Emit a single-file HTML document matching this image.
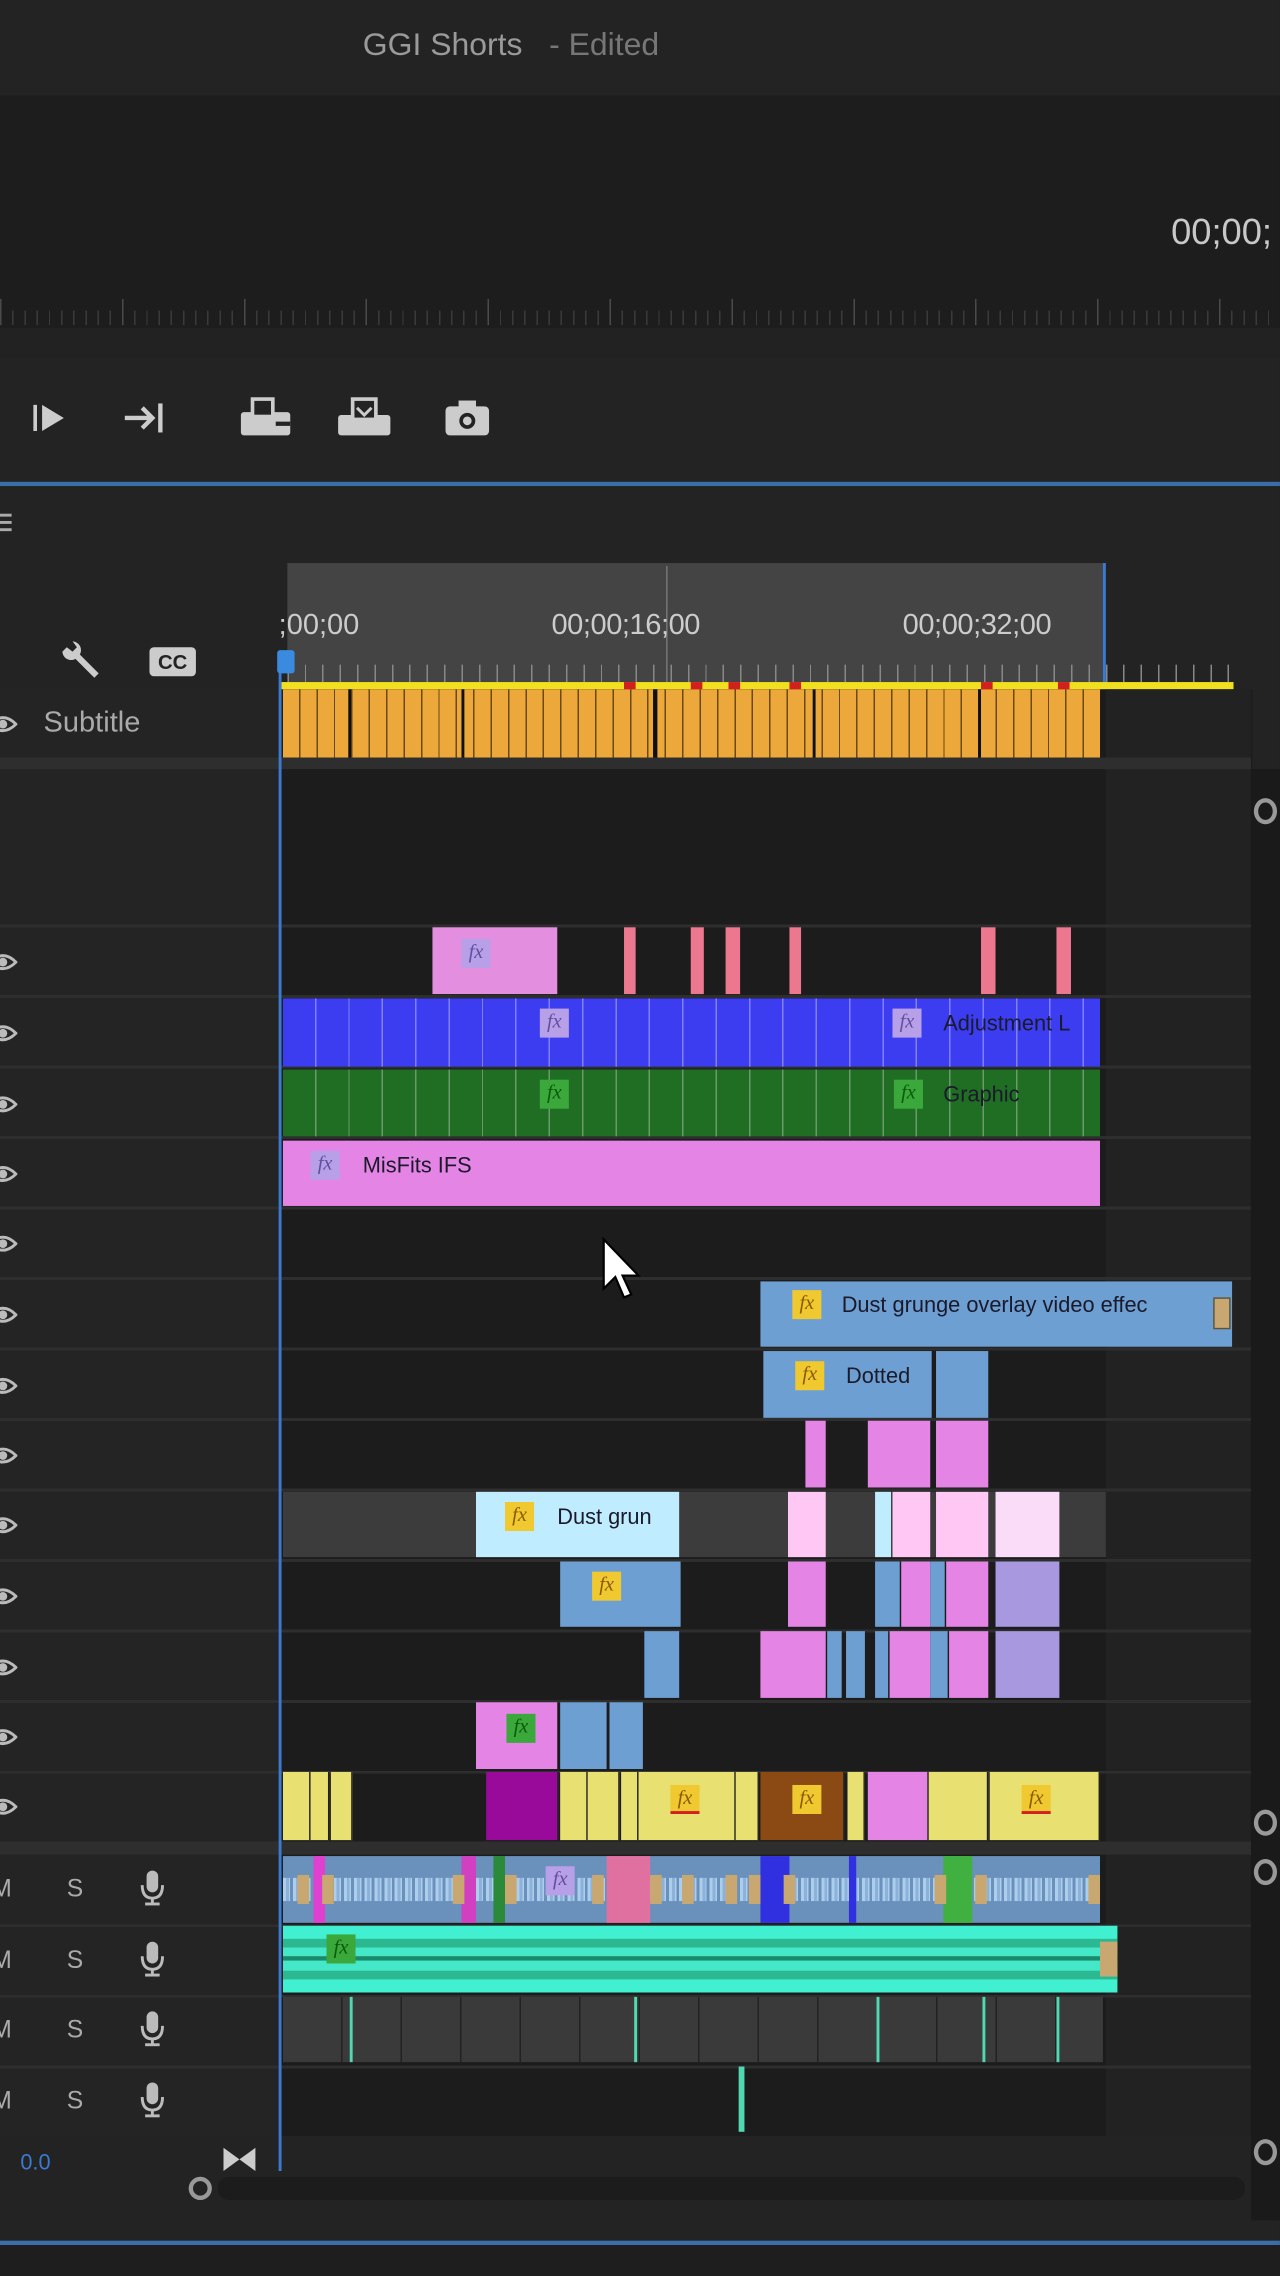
<!DOCTYPE html>
<html><head><meta charset="utf-8"><style>
*{margin:0;padding:0;box-sizing:border-box}
body{width:1280px;height:2276px;overflow:hidden;background:#1e1e1e;font-family:"Liberation Sans",sans-serif}
#w{position:absolute;left:0;top:0;width:882px;height:1568px;transform:scale(1.4512);transform-origin:0 0;background:#1e1e1e;overflow:hidden}
.a{position:absolute}
.c{position:absolute;border-right:1px solid #222}
.fx{position:absolute;width:20px;height:20px;font:italic 14px "Liberation Serif",serif;text-align:center;line-height:20px}
.y{background:#f0c830;color:#8a5a00}
.p{background:#b8a0e8;color:#6050a0}
.g{background:#3aa83a;color:#0c5a0c}
.t{position:absolute;font-size:15px;color:#1a1a2a;white-space:nowrap}
.eye{position:absolute;left:-8px;width:20px;height:14px}
.lbl{position:absolute;color:#aaa;font-size:17px}
.mic{position:absolute;left:96px;width:18px;height:26px}
</style></head><body><div id="w">
<svg width="0" height="0" style="position:absolute"><defs>
<symbol id="eye" viewBox="0 0 20 14"><path d="M1 7 Q10 -2 19 7 Q10 16 1 7 Z" fill="none" stroke="#bbb" stroke-width="2"/><circle cx="10" cy="7" r="3" fill="#bbb"/></symbol>
<symbol id="mic" viewBox="0 0 18 26"><rect x="5" y="1" width="8" height="15" rx="4" fill="#bbb"/><path d="M2 11 Q2 20 9 20 Q16 20 16 11" fill="none" stroke="#bbb" stroke-width="2"/><rect x="8" y="20" width="2" height="4" fill="#bbb"/><rect x="4" y="23" width="10" height="2" fill="#bbb"/></symbol>
</defs></svg>
<!-- top -->
<div class="a" style="left:0;top:0;width:882px;height:66px;background:#232323"></div>
<div class="a" style="left:250px;top:18px;font-size:22px;color:#9a9a9a">GGI Shorts&nbsp;&nbsp;&nbsp;<span style="color:#777">- Edited</span></div>
<div class="a" style="left:0;top:66px;width:882px;height:180px;background:#1d1d1d"></div>
<div class="a" style="left:807px;top:146px;font-size:25px;color:#c8c8c8">00;00;</div>
<div class="a" style="left:0;top:214px;width:882px;height:10px;background:repeating-linear-gradient(90deg,#3a3a3a 0 1px,transparent 1px 8.4px)"></div>
<div class="a" style="left:0;top:206px;width:882px;height:18px;background:repeating-linear-gradient(90deg,#4a4a4a 0 1px,transparent 1px 84px)"></div>
<div class="a" style="left:0;top:226px;width:882px;height:20px;background:#222"></div>
<div class="a" style="left:0;top:246px;width:882px;height:86px;background:#232323"></div>
<svg class="a" style="left:22px;top:277px" width="28" height="22" viewBox="0 0 28 22"><rect x="1" y="2" width="2.5" height="18" fill="#ccc"/><path d="M7 2 L22 11 L7 20 Z" fill="#ccc"/></svg>
<svg class="a" style="left:84px;top:276px" width="34" height="24" viewBox="0 0 34 24"><path d="M2 12 H20 M14 5 L21 12 L14 19" fill="none" stroke="#ccc" stroke-width="3"/><rect x="25" y="2" width="3" height="20" fill="#ccc"/></svg>
<svg class="a" style="left:164px;top:272px" width="42" height="30" viewBox="0 0 42 30"><rect x="2" y="12" width="34" height="16" rx="2" fill="#ccc"/><rect x="10" y="3" width="14" height="12" fill="#232323" stroke="#ccc" stroke-width="2.5"/><path d="M26 20 h10" stroke="#232323" stroke-width="3"/></svg>
<svg class="a" style="left:231px;top:272px" width="42" height="30" viewBox="0 0 42 30"><rect x="2" y="14" width="36" height="14" rx="2" fill="#ccc"/><rect x="12" y="3" width="16" height="14" fill="#232323" stroke="#ccc" stroke-width="2.5"/><path d="M15 9 L20 14 L25 9" fill="none" stroke="#ccc" stroke-width="2"/></svg>
<svg class="a" style="left:306px;top:275px" width="32" height="26" viewBox="0 0 32 26"><rect x="1" y="5" width="30" height="20" rx="3" fill="#ccc"/><rect x="10" y="1" width="12" height="6" fill="#ccc"/><circle cx="16" cy="15" r="5.5" fill="#232323"/><circle cx="16" cy="15" r="3" fill="#ccc"/></svg>
<div class="a" style="left:0;top:332px;width:882px;height:3px;background:#3a6ea8"></div>
<!-- timeline panel -->
<div class="a" style="left:0;top:335px;width:882px;height:1210px;background:#232323"></div>
<div class="a" style="left:0;top:354px;width:8px;height:2px;background:#aaa;box-shadow:0 5px #aaa,0 10px #aaa"></div>
<div class="a" style="left:198px;top:388px;width:564px;height:84px;background:#444"></div>
<div class="a" style="left:459px;top:390px;width:1px;height:82px;background:#777"></div>
<div class="a" style="left:192px;top:420px;font-size:20px;color:#ccc">;00;00</div>
<div class="a" style="left:380px;top:420px;font-size:20px;color:#ccc;letter-spacing:-.3px">00;00;16;00</div>
<div class="a" style="left:622px;top:420px;font-size:20px;color:#ccc;letter-spacing:-.3px">00;00;32;00</div>
<div class="a" style="left:198px;top:458px;width:652px;height:12px;background:repeating-linear-gradient(90deg,#888 0 1px,transparent 1px 12px)"></div>
<div class="a" style="left:760px;top:388px;width:2px;height:84px;background:#3a7ad0"></div>
<svg class="a" style="left:38px;top:440px" width="32" height="32" viewBox="0 0 32 32"><path d="M5 9 a6 6 0 0 0 9 5 L27 27 L30 24 L17 11 a6 6 0 0 0 -5 -9 l3 4 -3 3 -4 -3 Z" fill="#ccc"/></svg>
<div class="a" style="left:103px;top:446px;width:32px;height:20px;background:#ccc;border-radius:3px;font:bold 14px sans-serif;color:#232323;text-align:center;line-height:20px">CC</div>
<div class="a" style="left:194px;top:470px;width:656px;height:5px;background:#f0e020"></div>
<!-- track area -->
<div class="a" style="left:193px;top:475px;width:670px;height:1000px;background:#1c1c1c"></div>
<div class="a" style="left:762px;top:475px;width:100px;height:1000px;background:#222"></div>
<div class="a" style="left:0;top:522px;width:862px;height:8px;background:#2e2e2e"></div>
<div class="a" style="left:862px;top:530px;width:20px;height:1000px;background:#1a1a1a"></div>
<div class="a" style="left:0;top:475px;width:192px;height:1000px;background:#242424"></div>
<div class="a" style="left:0;top:522px;width:192px;height:8px;background:#2e2e2e"></div>
<svg class="eye" style="top:492px"><use href="#eye"/></svg>
<div class="a" style="left:30px;top:487px;font-size:20px;color:#aaa">Subtitle</div>
<!-- subtitle clips -->
<div class="a" style="left:195px;top:475px;width:563px;height:47px;background:#eca83a;background-image:repeating-linear-gradient(90deg,transparent 0 11px,#6a4a10 11px 12px)"></div>
<div class="a" style="left:318px;top:475px;width:2px;height:47px;background:#111"></div>
<div class="a" style="left:450px;top:475px;width:3px;height:47px;background:#111"></div>
<div class="a" style="left:674px;top:475px;width:2px;height:47px;background:#111"></div>
<div class="a" style="left:240px;top:475px;width:2px;height:47px;background:#111"></div>
<div class="a" style="left:560px;top:475px;width:2px;height:47px;background:#111"></div>
<div class="a" style="left:430px;top:470px;width:8px;height:5px;background:#d02020"></div>
<div class="a" style="left:476px;top:470px;width:8px;height:5px;background:#d02020"></div>
<div class="a" style="left:502px;top:470px;width:8px;height:5px;background:#d02020"></div>
<div class="a" style="left:544px;top:470px;width:8px;height:5px;background:#d02020"></div>
<div class="a" style="left:676px;top:470px;width:8px;height:5px;background:#d02020"></div>
<div class="a" style="left:729px;top:470px;width:8px;height:5px;background:#d02020"></div>
<!-- track separators -->
<div class="a" style="left:0;top:637px;width:862px;height:633px;background:repeating-linear-gradient(180deg,#2e2e2e 0 2px,transparent 2px 48.6px)"></div>
<!-- eyes -->
<svg class="eye" style="top:656px"><use href="#eye"/></svg><svg class="eye" style="top:705px"><use href="#eye"/></svg><svg class="eye" style="top:754px"><use href="#eye"/></svg><svg class="eye" style="top:802px"><use href="#eye"/></svg><svg class="eye" style="top:850px"><use href="#eye"/></svg><svg class="eye" style="top:899px"><use href="#eye"/></svg><svg class="eye" style="top:948px"><use href="#eye"/></svg><svg class="eye" style="top:996px"><use href="#eye"/></svg><svg class="eye" style="top:1044px"><use href="#eye"/></svg><svg class="eye" style="top:1093px"><use href="#eye"/></svg><svg class="eye" style="top:1142px"><use href="#eye"/></svg><svg class="eye" style="top:1190px"><use href="#eye"/></svg><svg class="eye" style="top:1238px"><use href="#eye"/></svg>
<!-- row 638 -->
<div class="a" style="left:298px;top:639px;width:86px;height:46px;background:#e48ee0"></div><div class="fx p" style="left:318px;top:647px">fx</div>
<div class="a" style="left:430px;top:639px;width:8px;height:46px;background:#ec7890"></div>
<div class="a" style="left:476px;top:639px;width:9px;height:46px;background:#ec7890"></div>
<div class="a" style="left:500px;top:639px;width:10px;height:46px;background:#ec7890"></div>
<div class="a" style="left:544px;top:639px;width:8px;height:46px;background:#ec7890"></div>
<div class="a" style="left:676px;top:639px;width:10px;height:46px;background:#ec7890"></div>
<div class="a" style="left:728px;top:639px;width:10px;height:46px;background:#ec7890"></div>
<!-- blue -->
<div class="a" style="left:195px;top:688px;width:563px;height:47px;background:#3c3cf0;background-image:repeating-linear-gradient(90deg,transparent 0 22px,#8080ff 22px 23px)"></div>
<div class="fx p" style="left:372px;top:695px">fx</div><div class="fx p" style="left:615px;top:695px">fx</div>
<div class="t" style="left:650px;top:697px">Adjustment L</div>
<!-- green -->
<div class="a" style="left:195px;top:737px;width:563px;height:46px;background:#1f6e24;background-image:repeating-linear-gradient(90deg,transparent 0 22px,#6a9a6a 22px 23px)"></div>
<div class="fx g" style="left:372px;top:744px">fx</div><div class="fx g" style="left:616px;top:744px">fx</div>
<div class="t" style="left:650px;top:746px">Graphic</div>
<!-- misfits -->
<div class="a" style="left:195px;top:786px;width:563px;height:45px;background:#e484e4"></div>
<div class="fx p" style="left:214px;top:793px">fx</div>
<div class="t" style="left:250px;top:795px">MisFits IFS</div>
<!-- dust grunge -->
<div class="a" style="left:524px;top:883px;width:325px;height:45px;background:#6e9fd2"></div>
<div class="fx y" style="left:546px;top:889px">fx</div>
<div class="t" style="left:580px;top:891px">Dust grunge overlay video effec</div>
<div class="a" style="left:836px;top:894px;width:12px;height:22px;background:#c8a870;border:1px solid #554"></div>
<!-- dotted -->
<div class="a" style="left:526px;top:931px;width:116px;height:46px;background:#6e9fd2"></div>
<div class="a" style="left:645px;top:931px;width:36px;height:46px;background:#6e9fd2"></div>
<div class="fx y" style="left:548px;top:938px">fx</div>
<div class="t" style="left:583px;top:940px">Dotted</div>
<!-- row 978 -->
<div class="a" style="left:555px;top:979px;width:14px;height:46px;background:#e484e4"></div>
<div class="a" style="left:598px;top:979px;width:43px;height:46px;background:#e484e4"></div>
<div class="a" style="left:645px;top:979px;width:36px;height:46px;background:#e484e4"></div>
<!-- row 1027 -->
<div class="a" style="left:195px;top:1028px;width:567px;height:45px;background:#3c3c3c"></div>
<div class="a" style="left:328px;top:1028px;width:140px;height:45px;background:#c0ecff"></div>
<div class="fx y" style="left:348px;top:1035px">fx</div>
<div class="t" style="left:384px;top:1037px">Dust grun</div>
<div class="a" style="left:543px;top:1028px;width:26px;height:45px;background:#ffc8f4"></div>
<div class="a" style="left:603px;top:1028px;width:11px;height:45px;background:#c0ecff"></div>
<div class="a" style="left:615px;top:1028px;width:26px;height:45px;background:#ffc8f4"></div>
<div class="a" style="left:645px;top:1028px;width:36px;height:45px;background:#ffc8f4"></div>
<div class="a" style="left:686px;top:1028px;width:44px;height:45px;background:#fadcf8"></div>
<!-- row 1075 -->
<div class="a" style="left:386px;top:1076px;width:83px;height:45px;background:#6e9fd2"></div>
<div class="fx y" style="left:408px;top:1083px">fx</div>
<div class="a" style="left:543px;top:1076px;width:26px;height:45px;background:#e484e4"></div>
<div class="a" style="left:603px;top:1076px;width:17px;height:45px;background:#6e9fd2"></div>
<div class="a" style="left:621px;top:1076px;width:20px;height:45px;background:#e484e4"></div>
<div class="a" style="left:641px;top:1076px;width:10px;height:45px;background:#6e9fd2"></div>
<div class="a" style="left:652px;top:1076px;width:29px;height:45px;background:#e484e4"></div>
<div class="a" style="left:686px;top:1076px;width:44px;height:45px;background:#a898e0"></div>
<!-- row 1123 -->
<div class="a" style="left:444px;top:1124px;width:24px;height:46px;background:#6e9fd2"></div>
<div class="a" style="left:524px;top:1124px;width:45px;height:46px;background:#e484e4"></div>
<div class="a" style="left:570px;top:1124px;width:10px;height:46px;background:#6e9fd2"></div>
<div class="a" style="left:583px;top:1124px;width:13px;height:46px;background:#6e9fd2"></div>
<div class="a" style="left:603px;top:1124px;width:9px;height:46px;background:#6e9fd2"></div>
<div class="a" style="left:613px;top:1124px;width:28px;height:46px;background:#e484e4"></div>
<div class="a" style="left:641px;top:1124px;width:12px;height:46px;background:#6e9fd2"></div>
<div class="a" style="left:654px;top:1124px;width:27px;height:46px;background:#e484e4"></div>
<div class="a" style="left:686px;top:1124px;width:44px;height:46px;background:#a898e0"></div>
<!-- row 1172 -->
<div class="a" style="left:328px;top:1173px;width:56px;height:46px;background:#e484e4"></div>
<div class="fx g" style="left:349px;top:1181px">fx</div>
<div class="a" style="left:386px;top:1173px;width:32px;height:46px;background:#6e9fd2"></div>
<div class="a" style="left:420px;top:1173px;width:23px;height:46px;background:#6e9fd2"></div>
<!-- row 1221 -->
<div class="c" style="left:195px;top:1221px;width:19px;height:47px;background:#e8e070"></div>
<div class="c" style="left:214px;top:1221px;width:13px;height:47px;background:#e8e070"></div>
<div class="c" style="left:228px;top:1221px;width:15px;height:47px;background:#e8e070"></div>
<div class="c" style="left:335px;top:1221px;width:50px;height:47px;background:#9a0a9a"></div>
<div class="c" style="left:386px;top:1221px;width:19px;height:47px;background:#e8e070"></div>
<div class="c" style="left:405px;top:1221px;width:22px;height:47px;background:#e8e070"></div>
<div class="c" style="left:428px;top:1221px;width:12px;height:47px;background:#e8e070"></div>
<div class="c" style="left:440px;top:1221px;width:67px;height:47px;background:#e8e070"></div>
<div class="c" style="left:507px;top:1221px;width:16px;height:47px;background:#e8e070"></div>
<div class="c" style="left:524px;top:1221px;width:58px;height:47px;background:#8b4a14"></div>
<div class="c" style="left:584px;top:1221px;width:12px;height:47px;background:#e8e070"></div>
<div class="c" style="left:598px;top:1221px;width:42px;height:47px;background:#e484e4"></div>
<div class="c" style="left:640px;top:1221px;width:41px;height:47px;background:#e8e070"></div>
<div class="c" style="left:682px;top:1221px;width:76px;height:47px;background:#e8e070"></div>
<div class="fx y" style="left:462px;top:1230px;border-bottom:2px solid #d02020">fx</div>
<div class="fx y" style="left:546px;top:1230px">fx</div>
<div class="fx y" style="left:704px;top:1230px;border-bottom:2px solid #d02020">fx</div>
<div class="a" style="left:0;top:1270px;width:862px;height:8px;background:#2e2e2e"></div>
<!-- audio headers -->
<div class="lbl" style="left:-6px;top:1292px">M</div><div class="lbl" style="left:46px;top:1292px">S</div><svg class="mic" style="top:1288px"><use href="#mic"/></svg>
<div class="lbl" style="left:-6px;top:1341px">M</div><div class="lbl" style="left:46px;top:1341px">S</div><svg class="mic" style="top:1337px"><use href="#mic"/></svg>
<div class="lbl" style="left:-6px;top:1389px">M</div><div class="lbl" style="left:46px;top:1389px">S</div><svg class="mic" style="top:1385px"><use href="#mic"/></svg>
<div class="lbl" style="left:-6px;top:1438px">M</div><div class="lbl" style="left:46px;top:1438px">S</div><svg class="mic" style="top:1434px"><use href="#mic"/></svg>
<div class="a" style="left:0;top:1326px;width:862px;height:148px;background:repeating-linear-gradient(180deg,#2e2e2e 0 2px,transparent 2px 48.6px)"></div>
<!-- audio 1 -->
<div class="a" style="left:195px;top:1279px;width:563px;height:46px;background:#6a90bc"></div>
<div class="a" style="left:195px;top:1294px;width:563px;height:16px;background:repeating-linear-gradient(90deg,#c8e8ff 0 2px,#9ac0e8 2px 4px,#c8e8ff 4px 5px,transparent 5px 7px);opacity:.7"></div>
<div class="a" style="left:216px;top:1279px;width:8px;height:46px;background:#e040d0"></div>
<div class="a" style="left:318px;top:1279px;width:10px;height:46px;background:#d040c0"></div>
<div class="a" style="left:340px;top:1279px;width:8px;height:46px;background:#2a8a3a"></div>
<div class="a" style="left:418px;top:1279px;width:30px;height:46px;background:#e070a0"></div>
<div class="a" style="left:524px;top:1279px;width:20px;height:46px;background:#3030e0"></div>
<div class="a" style="left:585px;top:1279px;width:5px;height:46px;background:#3030e0"></div>
<div class="a" style="left:650px;top:1279px;width:20px;height:46px;background:#40b040"></div>
<div class="a" style="left:205px;top:1292px;width:8px;height:20px;background:#c8a870"></div>
<div class="a" style="left:222px;top:1292px;width:8px;height:20px;background:#c8a870"></div>
<div class="a" style="left:312px;top:1292px;width:8px;height:20px;background:#c8a870"></div>
<div class="a" style="left:348px;top:1292px;width:8px;height:20px;background:#c8a870"></div>
<div class="a" style="left:408px;top:1292px;width:8px;height:20px;background:#c8a870"></div>
<div class="a" style="left:448px;top:1292px;width:8px;height:20px;background:#c8a870"></div>
<div class="a" style="left:470px;top:1292px;width:8px;height:20px;background:#c8a870"></div>
<div class="a" style="left:500px;top:1292px;width:8px;height:20px;background:#c8a870"></div>
<div class="a" style="left:516px;top:1292px;width:8px;height:20px;background:#c8a870"></div>
<div class="a" style="left:540px;top:1292px;width:8px;height:20px;background:#c8a870"></div>
<div class="a" style="left:644px;top:1292px;width:8px;height:20px;background:#c8a870"></div>
<div class="a" style="left:672px;top:1292px;width:8px;height:20px;background:#c8a870"></div>
<div class="a" style="left:750px;top:1292px;width:8px;height:20px;background:#c8a870"></div>
<div class="fx p" style="left:376px;top:1286px">fx</div>
<!-- audio 2 -->
<div class="a" style="left:195px;top:1327px;width:575px;height:46px;background:#40f0d0"></div>
<div class="a" style="left:195px;top:1336px;width:575px;height:28px;background:#2cb890"></div>
<div class="a" style="left:195px;top:1342px;width:575px;height:16px;background:#44e8c8"></div>
<div class="a" style="left:195px;top:1348px;width:575px;height:3px;background:#1a8a6a"></div>
<div class="fx g" style="left:225px;top:1333px">fx</div>
<div class="a" style="left:758px;top:1338px;width:12px;height:24px;background:#c8a870"></div>
<!-- audio 3 -->
<div class="a" style="left:195px;top:1376px;width:565px;height:45px;background:#3a3a3a;background-image:repeating-linear-gradient(90deg,transparent 0 40px,#222 40px 41px)"></div>
<div class="a" style="left:241px;top:1376px;width:2px;height:45px;background:#50d8b0"></div>
<div class="a" style="left:437px;top:1376px;width:2px;height:45px;background:#50d8b0"></div>
<div class="a" style="left:604px;top:1376px;width:2px;height:45px;background:#50d8b0"></div>
<div class="a" style="left:677px;top:1376px;width:2px;height:45px;background:#50d8b0"></div>
<div class="a" style="left:728px;top:1376px;width:2px;height:45px;background:#50d8b0"></div>
<div class="a" style="left:509px;top:1424px;width:4px;height:45px;background:#50d8b0"></div>
<!-- bottom -->
<div class="a" style="left:0;top:1472px;width:862px;height:30px;background:#232323"></div>
<div class="a" style="left:14px;top:1482px;font-size:15px;color:#3a7ad0">0.0</div>
<svg class="a" style="left:152px;top:1478px" width="26" height="20" viewBox="0 0 26 20"><path d="M2 2 L13 10 L2 18 Z M24 2 L13 10 L24 18 Z" fill="#ccc"/></svg>
<div class="a" style="left:150px;top:1500px;width:708px;height:16px;background:#1c1c1c;border-radius:8px"></div>
<div class="a" style="left:130px;top:1500px;width:16px;height:16px;border:3px solid #999;border-radius:50%"></div>
<div class="a" style="left:864px;top:550px;width:16px;height:18px;border:3px solid #999;border-radius:50%"></div>
<div class="a" style="left:864px;top:1247px;width:16px;height:18px;border:3px solid #999;border-radius:50%"></div>
<div class="a" style="left:864px;top:1281px;width:16px;height:18px;border:3px solid #999;border-radius:50%"></div>
<div class="a" style="left:864px;top:1474px;width:16px;height:18px;border:3px solid #999;border-radius:50%"></div>
<!-- playhead -->
<div class="a" style="left:192px;top:450px;width:2px;height:1046px;background:#3a7ad0"></div>
<div class="a" style="left:191px;top:448px;width:12px;height:16px;background:#3a8ae0;border-radius:2px"></div>
<!-- cursor -->
<svg class="a" style="left:414px;top:852px" width="30" height="46" viewBox="0 0 30 46"><path d="M2 2 L2 36 L10 28 L16 42 L21 40 L15 27 L26 27 Z" fill="#fff" stroke="#000" stroke-width="1.5"/></svg>
<div class="a" style="left:0;top:1544px;width:882px;height:3px;background:#3a6ea8"></div>
<div class="a" style="left:0;top:1547px;width:882px;height:21px;background:#1e1e1e"></div>
</div></body></html>
